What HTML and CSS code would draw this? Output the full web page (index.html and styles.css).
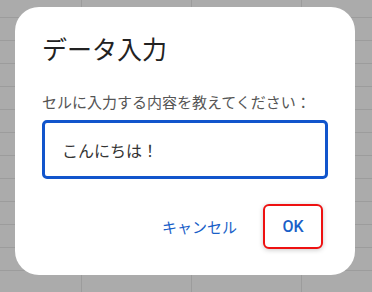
FILE: index.html
```html
<!DOCTYPE html>
<html lang="ja">
<head>
<meta charset="utf-8">
<title>データ入力</title>
<link rel="stylesheet" href="styles.css">
</head>
<body>
<div class="sheet">
  <div class="dialog">
    <h1 class="title">データ入力</h1>
    <p class="prompt">セルに入力する内容を教えてください：</p>
    <div class="field">こんにちは！</div>
    <div class="actions">
      <button class="btn btn-cancel">キャンセル</button>
      <button class="btn btn-ok">OK</button>
    </div>
  </div>
</div>
</body>
</html>
```
FILE: styles.css
```css
html, body {
  margin: 0;
  padding: 0;
}
body {
  width: 372px;
  height: 292px;
  overflow: hidden;
  font-family: "Noto Sans CJK JP", "Noto Sans", sans-serif;
}
.sheet {
  width: 372px;
  height: 292px;
  box-sizing: border-box;
  padding: 7px 17px 17px 15px;
  background-color: #ababab;
  background-image:
    linear-gradient(to right, transparent 81px, #9c9c9c 81px, #9c9c9c 82px, transparent 82px),
    linear-gradient(to bottom, transparent 17px, #9c9c9c 17px, #9c9c9c 18px, transparent 18px);
  background-size: 110px 100%, 100% 23px;
  background-position: 0 0, 0 0;
}
.dialog {
  width: 340px;
  height: 268px;
  box-sizing: border-box;
  background: #ffffff;
  border-radius: 24px;
  padding: 25px 27px 0 27px;
  display: flex;
  flex-direction: column;
}
.title {
  margin: 0;
  font-size: 25px;
  line-height: 32px;
  font-weight: 400;
  color: #222222;
}
.prompt {
  margin: 28px 0 0 0;
  font-size: 15px;
  line-height: 20px;
  color: #555555;
}
.field {
  margin-top: 8px;
  height: 59px;
  box-sizing: border-box;
  border: 3px solid #1155cc;
  border-radius: 5px;
  padding: 0 17px;
  display: flex;
  align-items: center;
  font-size: 16px;
  color: #333333;
}
.actions {
  margin-top: 25px;
  margin-right: 5px;
  display: flex;
  justify-content: flex-end;
  align-items: center;
  gap: 26px;
}
.btn {
  font-family: inherit;
  background: transparent;
  border: 0;
  padding: 0;
  color: #1a5fc8;
  cursor: pointer;
}
.btn-cancel {
  font-size: 15px;
  line-height: 20px;
}
.btn-ok {
  width: 60px;
  height: 45px;
  box-sizing: border-box;
  border: 2px solid #ee1111;
  border-radius: 6px;
  box-shadow: 0 1px 5px rgba(0, 0, 0, 0.22);
  font-family: Roboto, "Liberation Sans", sans-serif;
  font-size: 16px;
  font-weight: 500;
  background: #ffffff;
}
```
